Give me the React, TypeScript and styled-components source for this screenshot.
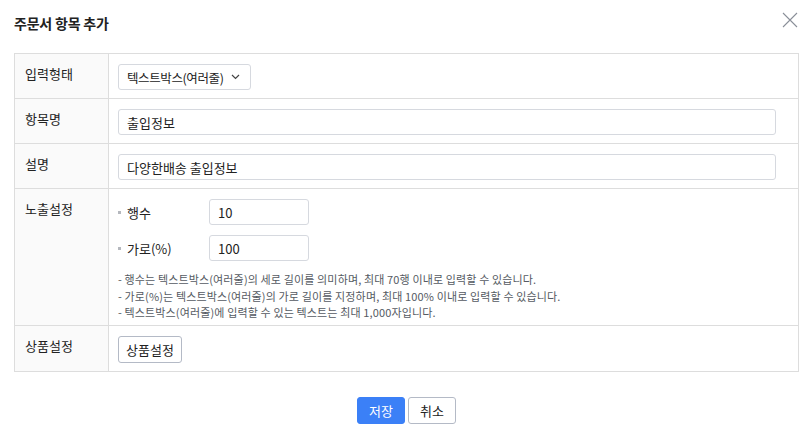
import React from "react";
import styled, { createGlobalStyle } from "styled-components";

const GlobalStyle = createGlobalStyle`
  body {
    margin: 0;
    background: #ffffff;
    font-family: "Noto Sans CJK KR", "Noto Sans", sans-serif;
    color: #222222;
  }
`;

const Dialog = styled.div`
  width: 811px;
  height: 435px;
  box-sizing: border-box;
  padding: 0 12px 0 14px;
`;

const Header = styled.div`
  display: flex;
  align-items: center;
  justify-content: space-between;
  height: 45px;
  padding-bottom: 8px;
`;

const Title = styled.h1`
  margin: 0;
  font-size: 14px;
  font-weight: 700;
  color: #222222;
  letter-spacing: -0.2px;
`;

const CloseButton = styled.button`
  width: 18px;
  height: 18px;
  padding: 0;
  border: 0;
  background: none;
  margin-top: -5px;
  display: flex;
  align-items: center;
  justify-content: center;
  cursor: pointer;
`;

const FormTable = styled.div`
  display: grid;
  grid-template-columns: 94px 1fr;
  border-top: 1px solid #dddddd;
  border-left: 1px solid #dddddd;
  border-right: 1px solid #dddddd;
`;

const LabelCell = styled.div`
  background: #fafafa;
  border-right: 1px solid #dddddd;
  border-bottom: 1px solid #dddddd;
  padding: 11px 10px 0;
  font-size: 13px;
  line-height: 18px;
  color: #222222;
`;

const ValueCell = styled.div<{ $bottom?: number }>`
  border-bottom: 1px solid #dddddd;
  padding: 10px 22px ${(p) => p.$bottom ?? 8}px 9px;
  display: flex;
  flex-direction: column;
`;

const SelectBox = styled.div`
  width: 133px;
  height: 26px;
  box-sizing: border-box;
  border: 1px solid #d6d9df;
  border-radius: 3px;
  display: flex;
  align-items: center;
  justify-content: space-between;
  padding: 0 10px 0 8px;
  font-size: 12.5px;
  letter-spacing: -0.4px;
  color: #222222;
`;

const TextInput = styled.div<{ $width?: number }>`
  width: ${(p) => (p.$width ? `${p.$width}px` : "100%")};
  height: 26px;
  box-sizing: border-box;
  border: 1px solid #d6d9df;
  border-radius: 3px;
  display: flex;
  align-items: center;
  padding: 0 8px;
  font-size: 13px;
  color: #222222;
`;

const SettingList = styled.div`
  display: flex;
  flex-direction: column;
  gap: 10px;
`;

const SettingRow = styled.div`
  display: grid;
  grid-template-columns: 91px auto;
  align-items: center;
`;

const SettingLabel = styled.div`
  display: flex;
  align-items: center;
  gap: 6px;
  font-size: 13px;
  color: #222222;

  &::before {
    content: "";
    width: 3px;
    height: 3px;
    background: #b5b8be;
  }
`;

const Notes = styled.ul`
  list-style: none;
  margin: 10px 0 0;
  padding: 0;
  font-size: 11px;
  line-height: 16.5px;
  color: #555a62;
  letter-spacing: 0.14px;
`;

const Button = styled.button<{ $primary?: boolean }>`
  height: 27px;
  box-sizing: border-box;
  padding: 0 11px;
  border-radius: 3px;
  border: 1px solid ${(p) => (p.$primary ? "#3b80f7" : "#b4bac6")};
  background: ${(p) => (p.$primary ? "#3b80f7" : "#ffffff")};
  color: ${(p) => (p.$primary ? "#ffffff" : "#222222")};
  font-family: inherit;
  font-size: 13px;
  cursor: pointer;
`;

const SmallButton = styled(Button)`
  align-self: flex-start;
  padding: 0 7px;
`;

const Footer = styled.div`
  display: flex;
  justify-content: center;
  gap: 3px;
  padding-top: 25px;
`;

const FooterButton = styled(Button)`
  width: 48px;
  padding: 0;
`;

const notes = [
  "- 행수는 텍스트박스(여러줄)의 세로 길이를 의미하며, 최대 70행 이내로 입력할 수 있습니다.",
  "- 가로(%)는 텍스트박스(여러줄)의 가로 길이를 지정하며, 최대 100% 이내로 입력할 수 있습니다.",
  "- 텍스트박스(여러줄)에 입력할 수 있는 텍스트는 최대 1,000자입니다.",
];

const App: React.FC = () => {
  return (
    <Dialog>
      <GlobalStyle />
      <Header>
        <Title>주문서 항목 추가</Title>
        <CloseButton aria-label="닫기">
          <svg width="16" height="16" viewBox="0 0 16 16">
            <path d="M1 1 L15 15 M15 1 L1 15" stroke="#8a8f99" strokeWidth="1.1" />
          </svg>
        </CloseButton>
      </Header>

      <FormTable>
        <LabelCell>입력형태</LabelCell>
        <ValueCell>
          <SelectBox>
            <span>텍스트박스(여러줄)</span>
            <svg width="9" height="6" viewBox="0 0 9 6">
              <path d="M1 1 L4.5 4.5 L8 1" fill="none" stroke="#444" strokeWidth="1.2" />
            </svg>
          </SelectBox>
        </ValueCell>

        <LabelCell>항목명</LabelCell>
        <ValueCell>
          <TextInput>출입정보</TextInput>
        </ValueCell>

        <LabelCell>설명</LabelCell>
        <ValueCell>
          <TextInput>다양한배송 출입정보</TextInput>
        </ValueCell>

        <LabelCell>노출설정</LabelCell>
        <ValueCell $bottom={4}>
          <SettingList>
            <SettingRow>
              <SettingLabel>행수</SettingLabel>
              <TextInput $width={100}>10</TextInput>
            </SettingRow>
            <SettingRow>
              <SettingLabel>가로(%)</SettingLabel>
              <TextInput $width={100}>100</TextInput>
            </SettingRow>
          </SettingList>
          <Notes>
            {notes.map((note) => (
              <li key={note}>{note}</li>
            ))}
          </Notes>
        </ValueCell>

        <LabelCell>상품설정</LabelCell>
        <ValueCell>
          <SmallButton>상품설정</SmallButton>
        </ValueCell>
      </FormTable>

      <Footer>
        <FooterButton $primary>저장</FooterButton>
        <FooterButton>취소</FooterButton>
      </Footer>
    </Dialog>
  );
};

export default App;
